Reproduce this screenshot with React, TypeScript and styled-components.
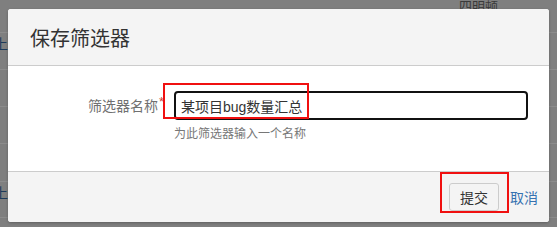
import React from 'react';
import styled, { createGlobalStyle } from 'styled-components';

const GlobalStyle = createGlobalStyle`
  html, body {
    margin: 0;
    padding: 0;
  }
  body {
    font-family: "Liberation Sans", "Noto Sans CJK SC", sans-serif;
  }
`;

const rows = [
  { text: '', height: 33 },
  { text: '上', height: 37 },
  { text: '', height: 37 },
  { text: '', height: 37 },
  { text: '', height: 38 },
  { text: '上', height: 36 },
];

const App = () => {
  return (
    <>
      <GlobalStyle />
      <Page>
        <BackTable>
          {rows.map((row, i) => (
            <BackRow key={i} $height={row.height}>
              <BackLink>{row.text}</BackLink>
            </BackRow>
          ))}
        </BackTable>
        <BackHeading>四明顿</BackHeading>

        <Dialog>
          <DialogHeader>
            <DialogTitle>保存筛选器</DialogTitle>
          </DialogHeader>

          <DialogBody>
            <FieldRow>
              <FieldLabel>
                筛选器名称<Required>*</Required>
              </FieldLabel>
              <FieldInput defaultValue="某项目bug数量汇总" />
              <span />
              <FieldHelp>为此筛选器输入一个名称</FieldHelp>
            </FieldRow>
            <Highlight style={{ left: 155, top: 17, width: 146, height: 36 }} />
          </DialogBody>

          <DialogFooter>
            <SubmitButton>提交</SubmitButton>
            <CancelLink>取消</CancelLink>
            <Highlight style={{ right: 40, top: 0, width: 69, height: 41 }} />
          </DialogFooter>
        </Dialog>
      </Page>
    </>
  );
};

const Page = styled.div`
  position: relative;
  width: 557px;
  height: 227px;
  overflow: hidden;
  background-color: #7f7f7f;
`;

const BackTable = styled.div`
  display: flex;
  flex-direction: column;
`;

const BackRow = styled.div<{ $height: number }>`
  height: ${props => props.$height}px;
  border-bottom: 1px solid #8c8c8c;
  display: flex;
  align-items: flex-start;
  padding-top: 3px;
  box-sizing: border-box;
`;

const BackLink = styled.span`
  font-size: 14px;
  line-height: 16px;
  color: #1d3a5a;
  margin-left: -6px;
`;

const BackHeading = styled.span`
  position: absolute;
  top: 0;
  left: 459px;
  font-size: 13px;
  line-height: 14px;
  color: #3a3a3a;
`;

const Dialog = styled.div`
  position: absolute;
  left: 8px;
  top: 9px;
  width: 541px;
  height: 213px;
  display: flex;
  flex-direction: column;
  background-color: #ffffff;
  border-radius: 3px;
  overflow: hidden;
  box-shadow: 0 1px 3px rgba(0, 0, 0, 0.25);
`;

const DialogHeader = styled.div`
  height: 56px;
  display: flex;
  align-items: center;
  padding: 0 22px;
  background-color: #f4f4f4;
  border-bottom: 1px solid #cccccc;
`;

const DialogTitle = styled.h2`
  margin: 0;
  font-size: 20px;
  font-weight: 400;
  color: #333333;
`;

const DialogBody = styled.div`
  position: relative;
  height: 105px;
  padding-top: 25px;
  box-sizing: border-box;
`;

const FieldRow = styled.div`
  display: grid;
  grid-template-columns: 166px 354px;
  row-gap: 4px;
  align-items: center;
`;

const FieldLabel = styled.label`
  justify-self: end;
  padding-right: 10px;
  font-size: 14px;
  color: #707070;
  position: relative;
  top: -1px;
`;

const Required = styled.span`
  color: #d04437;
  font-size: 13px;
  position: relative;
  top: -5px;
  margin-left: 1px;
`;

const FieldInput = styled.input`
  box-sizing: border-box;
  width: 354px;
  height: 29px;
  padding: 0 5px;
  border: 2px solid #111111;
  border-radius: 4px;
  font-family: "Liberation Sans", "Noto Sans CJK SC", sans-serif;
  font-size: 14px;
  color: #333333;
  outline: none;
  background: #ffffff;
`;

const FieldHelp = styled.span`
  font-size: 12px;
  color: #777777;
`;

const Highlight = styled.div`
  position: absolute;
  box-sizing: border-box;
  border: 2px solid #f01010;
  pointer-events: none;
`;

const DialogFooter = styled.div`
  position: relative;
  flex: 1;
  display: flex;
  align-items: center;
  justify-content: flex-end;
  gap: 11px;
  padding: 0 11px 0 0;
  background-color: #f4f4f4;
  border-top: 1px solid #cccccc;
`;

const SubmitButton = styled.button`
  width: 50px;
  height: 28px;
  padding: 0;
  border: 1px solid #cccccc;
  border-radius: 3px;
  background-color: #f4f4f4;
  font-family: "Liberation Sans", "Noto Sans CJK SC", sans-serif;
  font-size: 14px;
  color: #333333;
  cursor: pointer;
`;

const CancelLink = styled.a`
  font-size: 14px;
  color: #3572b0;
  text-decoration: none;
  cursor: pointer;
`;

export default App;
